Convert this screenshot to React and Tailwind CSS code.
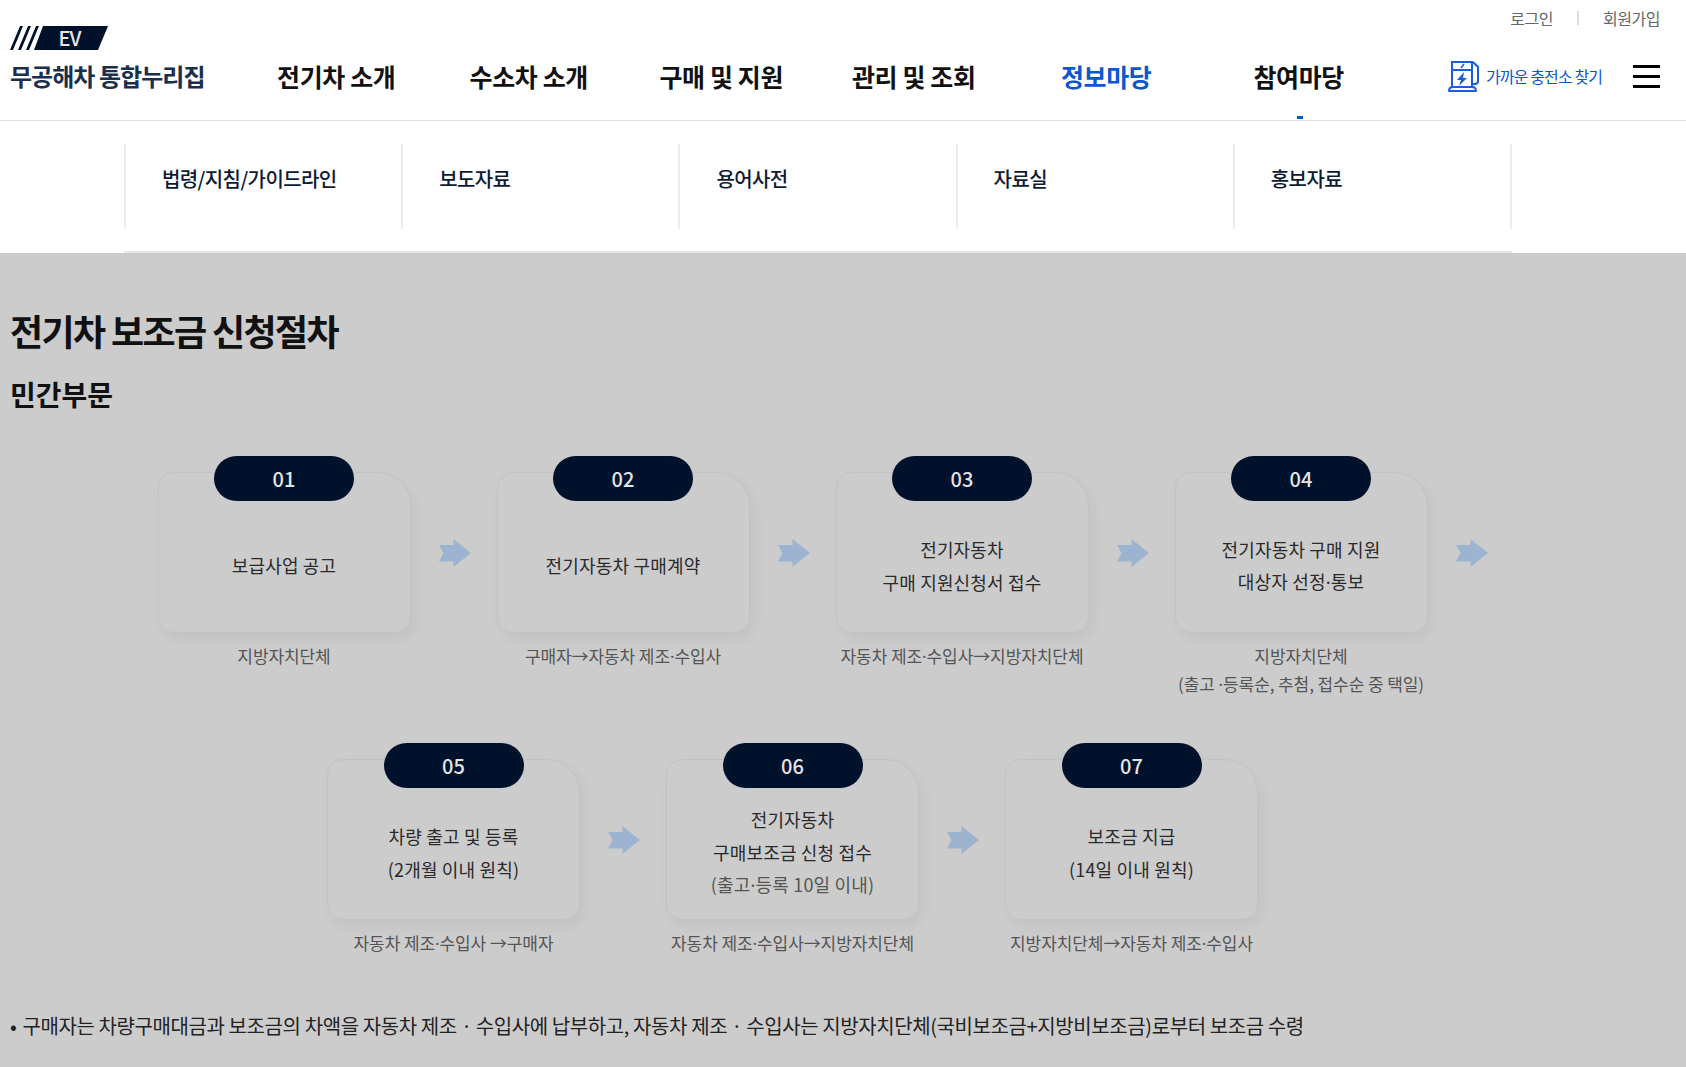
import { Fragment } from 'react';

const navItems = ['전기차 소개', '수소차 소개', '구매 및 지원', '관리 및 조회', '정보마당', '참여마당'];
const subItems = ['법령/지침/가이드라인', '보도자료', '용어사전', '자료실', '홍보자료'];

const rowOne = [
  { no: '01', lines: ['보급사업 공고'], sub: ['지방자치단체'] },
  { no: '02', lines: ['전기자동차 구매계약'], sub: ['구매자→자동차 제조·수입사'] },
  { no: '03', lines: ['전기자동차', '구매 지원신청서 접수'], sub: ['자동차 제조·수입사→지방자치단체'] },
  { no: '04', lines: ['전기자동차 구매 지원', '대상자 선정·통보'], sub: ['지방자치단체', '(출고 ·등록순, 추첨, 접수순 중 택일)'] },
];

const rowTwo = [
  { no: '05', lines: ['차량 출고 및 등록', '(2개월 이내 원칙)'], sub: ['자동차 제조·수입사 →구매자'] },
  { no: '06', lines: ['전기자동차', '구매보조금 신청 접수', '(출고·등록 10일 이내)'], sub: ['자동차 제조·수입사→지방자치단체'], muted: 2 },
  { no: '07', lines: ['보조금 지급', '(14일 이내 원칙)'], sub: ['지방자치단체→자동차 제조·수입사'], last: true },
];

// the CJK font's middle dot is full width, the reference has a narrow one
function Dotted({ text }) {
  const parts = text.split('·');
  return parts.map((part, i) => (
    <Fragment key={i}>
      {i > 0 && <span className="font-['Noto_Sans']">·</span>}
      {part}
    </Fragment>
  ));
}

function Logo() {
  return (
    <div>
      <svg width="108" height="24" viewBox="0 0 108 24" className="block overflow-visible">
        <path d="M0 24 L10 0 H13 L3 24 Z M8 24 L18 0 H21 L11 24 Z M16 24 L26 0 H29 L19 24 Z" fill="#00112c" />
        <path d="M24 24 L33 0 H98 L88 24 Z" fill="#00112c" />
        <text x="59.5" y="19.5" textAnchor="middle" fontSize="20" fontWeight="500" letterSpacing="-1" fill="#e8e8e8" fontFamily="'Noto Sans CJK KR', sans-serif">EV</text>
      </svg>
      <div className="mt-[8px] whitespace-nowrap text-[24px] font-bold leading-[36px] tracking-[-0.04em] text-[#1a2f4d]">무공해차 통합누리집</div>
    </div>
  );
}

function ChargerIcon() {
  return (
    <svg width="32" height="32" viewBox="0 0 32 32" fill="none" stroke="#1a5fd8" strokeWidth="2" className="block">
      <path d="M4 27 V2 H24 V27" />
      <path d="M1 31 Q1 27 5 27 H24 Q28 27 28 31 Z" strokeLinejoin="round" />
      <path d="M4 10 H24" />
      <path d="M16 4 L13 8" strokeWidth="1.5" />
      <path d="M16 12 L9 20 H13 L11 26 L19 18 H15 Z" fill="#1a5fd8" stroke="none" />
      <path d="M24 24 H27 Q30 24 30 21 V7 L25 2" />
    </svg>
  );
}

function Step({ step, arrow }) {
  return (
    <div className="flex w-[339px] shrink-0 items-start">
      <div className="w-[253px] shrink-0">
        <div className="relative mt-[17px] flex h-[161px] w-[253px] flex-col items-center justify-center rounded-tl-[16px] rounded-tr-[34px] rounded-br-[16px] rounded-bl-[16px] border border-[#c2c2c2] pt-[26px] text-center text-[18px] leading-[32.5px] tracking-[0.01em] text-[#2a2a2a] shadow-[4px_6px_14px_rgba(0,0,0,0.05)]">
          <div className="absolute left-1/2 top-[-17px] flex h-[45px] w-[140px] -translate-x-1/2 items-center justify-center rounded-[24px] bg-[#00112c] text-[20px] font-medium leading-none tracking-normal text-[#e4e4e4]">
            {step.no}
          </div>
          {step.lines.map((line, i) => (
            <div key={i} className={step.muted === i ? 'text-[#555555]' : undefined}>
              <Dotted text={line} />
            </div>
          ))}
        </div>
        <div className="mt-[9px] text-center text-[17px] leading-[28px] tracking-[-0.005em] text-[#555555]">
          {step.sub.map((line, i) => (
            <div key={i} className="whitespace-nowrap">
              <Dotted text={line} />
            </div>
          ))}
        </div>
      </div>
      {arrow && (
        <svg width="32" height="28" viewBox="0 0 32 28" className="ml-[28px] mt-[84px] shrink-0">
          <path d="M0 6 H14.5 V0 L32 14 L14.5 28 V22.5 H0 L4.5 14 Z" fill="#9db4d1" />
        </svg>
      )}
    </div>
  );
}

function StepRow({ steps, className }) {
  return (
    <div className={`flex justify-center ${className}`}>
      {steps.map((step) => (
        <Step key={step.no} step={step} arrow={!step.last} />
      ))}
    </div>
  );
}

export default function App() {
  return (
    <div className="min-h-[1067px] bg-[#cccccc] font-['Noto_Sans_CJK_KR','Noto_Sans',sans-serif]">
      <header className="relative h-[121px] border-b border-[#e2e2e2] bg-white">
        <div className="absolute right-[26px] top-[7px] flex items-center text-[16px] leading-[22px] tracking-[-0.03em] text-[#666666]">
          <span>로그인</span>
          <span className="mx-[24px] h-[14px] w-[2px] bg-[#dddddd]" />
          <span>회원가입</span>
        </div>
        <div className="flex h-[120px] items-start pl-[10px]">
          <div className="w-[230px] shrink-0 pt-[26px]">
            <Logo />
          </div>
          <nav className="flex h-[120px] items-center pt-[32px]">
            {navItems.map((item) => (
              <div key={item} className={`w-[192.5px] text-center text-[25px] font-bold leading-[36px] tracking-[-0.015em] ${item === '정보마당' ? 'text-[#0b57d0]' : 'text-[#111111]'}`}>
                {item}
              </div>
            ))}
          </nav>
          <div className="ml-[53px] flex items-center pt-[60px]">
            <ChargerIcon />
            <span className="ml-[6px] whitespace-nowrap text-[16px] leading-[24px] tracking-[-0.055em] text-[#0b57d0]">가까운 충전소 찾기</span>
            <div className="ml-[31px] flex w-[27px] flex-col gap-[7px]">
              <span className="h-[3px] bg-black" />
              <span className="h-[3px] bg-black" />
              <span className="h-[3px] bg-black" />
            </div>
          </div>
        </div>
        <span className="absolute bottom-[1px] left-[1297px] h-[3px] w-[6px] bg-[#0b57d0]" />
      </header>

      <div className="h-[132px] bg-white pl-[124px] pt-[23px]">
        <div className="flex h-[109px] w-[1388px] flex-col border-b-2 border-[#e6e6e6]">
          <div className="flex h-[85px] border-r-2 border-[#ececec]">
            {subItems.map((item) => (
              <div key={item} className="w-[277.6px] border-l-2 border-[#ececec] pl-[36px] pt-[20px] text-[20px] font-medium leading-[30px] tracking-[-0.03em] text-[#0e1a33]">
                {item}
              </div>
            ))}
          </div>
        </div>
      </div>

      <main className="pl-[10px] pr-[25px] pt-[52px]">
        <h1 className="text-[36px] font-bold leading-[50px] tracking-[-0.045em] text-[#111111]">전기차 보조금 신청절차</h1>
        <h2 className="mt-[21px] text-[28px] font-bold leading-[36px] text-[#111111]">민간부문</h2>
        <StepRow steps={rowOne} className="mt-[43px]" />
        <StepRow steps={rowTwo} className="mt-[43px]" />
        <p className="mt-[53px] whitespace-nowrap text-[20px] leading-[30px] tracking-[-0.02em] text-[#222222]">
          <span className="mr-[6px]">•</span>구매자는 차량구매대금과 보조금의 차액을 자동차 제조 · 수입사에 납부하고, 자동차 제조 · 수입사는 지방자치단체(국비보조금+지방비보조금)로부터 보조금 수령
        </p>
      </main>
    </div>
  );
}
